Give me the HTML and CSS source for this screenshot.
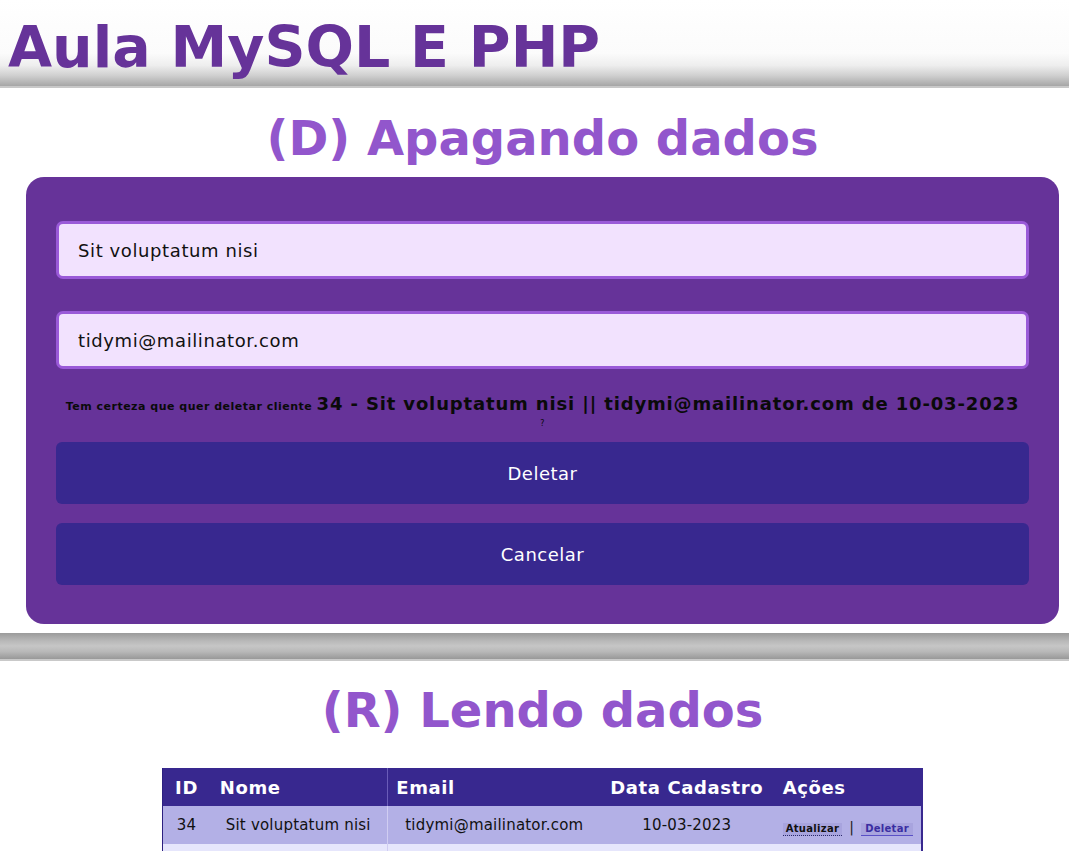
FILE: index.html
```html
<!DOCTYPE html>
<html lang="pt-BR">
<head>
<meta charset="utf-8">
<title>Aula MySQL E PHP</title>
<link rel="stylesheet" href="styles.css">
</head>
<body>
<header class="topo">
  <h1 class="titulo">Aula MySQL E PHP</h1>
</header>
<main class="conteudo">
  <h2 class="secao">(D) Apagando dados</h2>
  <form class="cartao">
    <input class="campo" type="text" value="Sit voluptatum nisi">
    <input class="campo" type="text" value="tidymi@mailinator.com">
    <p class="aviso">Tem certeza que quer deletar cliente <strong class="destaque">34 - Sit voluptatum nisi || tidymi@mailinator.com de 10-03-2023</strong><br><span class="interroga">?</span></p>
    <button class="botao" type="button">Deletar</button>
    <button class="botao" type="button">Cancelar</button>
  </form>
</main>
<div class="barra"></div>
<main class="conteudo">
  <h2 class="secao secao-r">(R) Lendo dados</h2>
  <table class="tabela">
    <colgroup>
      <col class="c-id"><col class="c-nome"><col class="c-email"><col class="c-data"><col class="c-acoes">
    </colgroup>
    <thead>
      <tr>
        <th class="centro">ID</th>
        <th class="th-nome">Nome</th>
        <th class="th-email sep">Email</th>
        <th class="centro">Data Cadastro</th>
        <th class="th-acoes">Ações</th>
      </tr>
    </thead>
    <tbody>
      <tr class="linha-a">
        <td class="centro">34</td>
        <td class="td-nome">Sit voluptatum nisi</td>
        <td class="td-email sep">tidymi@mailinator.com</td>
        <td class="centro">10-03-2023</td>
        <td class="td-acoes"><span class="acao atualizar">Atualizar</span><span class="pipe">|</span><span class="acao deletar">Deletar</span></td>
      </tr>
      <tr class="linha-b">
        <td class="centro">&nbsp;</td>
        <td></td>
        <td class="sep"></td>
        <td></td>
        <td></td>
      </tr>
    </tbody>
  </table>
</main>
</body>
</html>
```

FILE: styles.css
```css
html, body {
  margin: 0;
  padding: 0;
  background: #ffffff;
  font-family: "DejaVu Sans", Verdana, sans-serif;
}

.topo {
  height: 88px;
  padding-top: 12px;
  box-sizing: border-box;
  background: linear-gradient(to bottom, #ffffff 0%, #fbfbfb 62%, #eeeeee 76%, #cfcfcf 88%, #a6a6a6 100%);
  border-bottom: 2px solid #c8c8c8;
}

.titulo {
  margin: 0 0 0 8px;
  font-size: 57px;
  line-height: 70px;
  font-weight: bold;
  color: #663399;
}

.conteudo {
  margin-left: 26px;
  width: 1033px;
}

.secao {
  margin: 22px 0 0 0;
  text-align: center;
  font-size: 48px;
  line-height: 56px;
  font-weight: bold;
  color: #9256cc;
}

.secao-r {
  margin-top: 21px;
  margin-bottom: 30px;
}

.cartao {
  margin: 11px 0 0 0;
  padding: 44px 30px 39px 30px;
  background: #663399;
  border-radius: 18px;
  display: flex;
  flex-direction: column;
}

.campo {
  height: 58px;
  box-sizing: border-box;
  border: 3px solid #9a5ad8;
  border-radius: 7px;
  background: #f2e2fe;
  padding: 0 19px;
  font-family: "DejaVu Sans", Verdana, sans-serif;
  font-size: 18px;
  letter-spacing: 0.6px;
  color: #111111;
  margin: 0 0 32px 0;
  outline: none;
}

.campo + .campo {
  margin-bottom: 0;
}

.aviso {
  margin: 23px 0 12px 0;
  text-align: center;
  font-size: 11px;
  letter-spacing: 0.5px;
  line-height: 13px;
  font-weight: bold;
  color: #0a0a0a;
}

.destaque {
  font-size: 18px;
  letter-spacing: 0.85px;
  line-height: 24px;
}

.interroga {
  font-size: 8px;
  font-weight: normal;
}

.botao {
  height: 62px;
  border: none;
  border-radius: 6px;
  background: #38288f;
  color: #ffffff;
  font-family: "DejaVu Sans", Verdana, sans-serif;
  font-size: 18px;
  letter-spacing: 0.5px;
  margin: 0;
}

.botao + .botao {
  margin-top: 19px;
}

.barra {
  margin-top: 9px;
  height: 26px;
  background: linear-gradient(to bottom, #9b9b9b 0%, #b8b8b8 30%, #c6c6c6 50%, #b8b8b8 72%, #989898 100%);
  border-bottom: 2px solid #c9c9c9;
}

.tabela {
  margin: 0 auto;
  width: 759px;
  table-layout: fixed;
  border-collapse: collapse;
  border-left: 1px solid #2c2080;
  border-right: 2px solid #38288f;
}

.c-id { width: 47px; }
.c-nome { width: 178px; }
.c-email { width: 213px; }
.c-data { width: 172px; }
.c-acoes { width: 149px; }

.tabela th {
  height: 38px;
  padding: 0;
  background: #38288f;
  color: #ffffff;
  font-size: 18px;
  letter-spacing: 0.6px;
  font-weight: bold;
  text-align: left;
  white-space: nowrap;
}

.tabela td {
  height: 35px;
  padding: 0;
  font-size: 15px;
  letter-spacing: 0.2px;
  color: #111111;
  text-align: left;
  white-space: nowrap;
}

.tabela .centro { text-align: center; }
.th-nome { padding-left: 10px !important; }
.th-email { padding-left: 8px !important; }
.th-acoes { padding-left: 10px !important; }
.td-nome { padding-left: 16px !important; }
.td-email { padding-left: 17px !important; }
.td-acoes { padding-left: 10px !important; padding-top: 3px !important; }

.tabela th.sep { border-left: 1px solid #6a5cb8; }
.tabela td.sep { border-left: 1px solid #d0cdf2; }

.linha-a td { background: #b3b0e6; }
.linha-b td { background: #e6e6fc; }

.acao {
  display: inline-block;
  font-size: 10px;
  letter-spacing: 0.3px;
  font-weight: bold;
  padding: 0 3px;
  line-height: 12px;
  background: #a8a4de;
}

.atualizar {
  color: #111111;
  border-bottom: 1px dotted #2a2a6a;
}

.deletar {
  color: #3a2ea2;
  border-bottom: 1px solid #5a50c6;
  padding: 0 4px;
}

.pipe {
  font-size: 14px;
  color: #222222;
  margin: 0 7px;
}
```
